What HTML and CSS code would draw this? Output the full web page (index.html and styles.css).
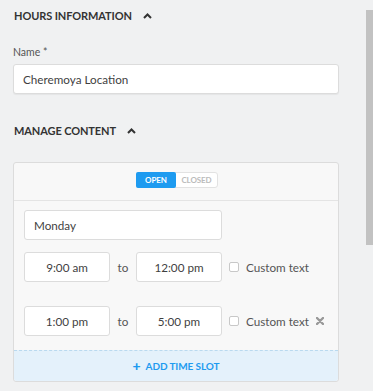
FILE: index.html
```html
<!DOCTYPE html>
<html>
<head>
<meta charset="utf-8">
<link rel="stylesheet" href="styles.css">
</head>
<body>
<div class="page">
  <main class="main">
    <h2 class="section-title">HOURS INFORMATION <svg class="chev" width="9" height="6" viewBox="0 0 9 6"><path d="M1 5 L4.5 1.5 L8 5" fill="none" stroke="#333" stroke-width="2"/></svg></h2>
    <label class="field-label">Name *</label>
    <div class="input name-input">Cheremoya Location</div>

    <h2 class="section-title second">MANAGE CONTENT <svg class="chev" width="9" height="6" viewBox="0 0 9 6"><path d="M1 5 L4.5 1.5 L8 5" fill="none" stroke="#333" stroke-width="2"/></svg></h2>

    <div class="panel">
      <div class="panel-head">
        <div class="toggle">
          <span class="tog tog-on">OPEN</span>
          <span class="tog tog-off">CLOSED</span>
        </div>
      </div>
      <div class="panel-body">
        <div class="input day-input">Monday</div>
        <div class="slot">
          <div class="input time">9:00 am</div>
          <span class="to">to</span>
          <div class="input time">12:00 pm</div>
          <span class="check"></span>
          <span class="custom">Custom text</span>
        </div>
        <div class="slot slot2">
          <div class="input time">1:00 pm</div>
          <span class="to">to</span>
          <div class="input time">5:00 pm</div>
          <span class="check"></span>
          <span class="custom">Custom text</span>
          <svg class="remove" width="8" height="8" viewBox="0 0 8 8"><path d="M1 1 L7 7 M7 1 L1 7" stroke="#999" stroke-width="2.4" stroke-linecap="round"/></svg>
        </div>
      </div>
      <div class="add-slot"><span class="plus">+</span> ADD TIME SLOT</div>
    </div>
  </main>
  <div class="scrollbar"><div class="thumb"></div></div>
</div>
</body>
</html>
```
FILE: styles.css
```css
html, body {
  margin: 0;
  padding: 0;
  background: #f0f1f2;
  font-family: Lato, "Liberation Sans", sans-serif;
  color: #444;
}
.page {
  display: flex;
  width: 373px;
  height: 391px;
  overflow: hidden;
}
.main {
  width: 326px;
  padding: 8px 0 0 13px;
  flex: none;
}
.scrollbar {
  margin-left: 27px;
  width: 7px;
  padding-top: 10px;
  flex: none;
}
.thumb {
  width: 7px;
  height: 235px;
  background: #c2c2c2;
}
.section-title {
  margin: 0 0 0 1px;
  font-size: 11px;
  font-weight: 700;
  color: #333;
  letter-spacing: -0.1px;
  line-height: 16px;
  display: flex;
  align-items: center;
}
.chev {
  margin-left: 11px;
}
.second {
  margin-top: 29px;
}
.field-label {
  display: block;
  margin: 21px 0 5px 0;
  font-size: 10.5px;
  line-height: 14px;
  color: #555;
}
.input {
  box-sizing: border-box;
  background: #fff;
  border: 1px solid #dcdcdc;
  border-radius: 3px;
  font-size: 11.7px;
  color: #3f3f3f;
  white-space: nowrap;
  flex: none;
}
.name-input {
  height: 30px;
  line-height: 28px;
  padding-left: 9px;
  box-shadow: 0 1px 1px rgba(0,0,0,0.05);
}
.panel {
  margin-top: 23px;
  background: #f8f8f8;
  border: 1px solid #dcdcdc;
  border-radius: 3px;
  box-sizing: border-box;
  height: 220px;
  display: flex;
  flex-direction: column;
}
.panel-head {
  height: 38px;
  border-bottom: 1px solid #e4e4e4;
  display: flex;
  justify-content: center;
  align-items: flex-start;
  padding-top: 9px;
  box-sizing: border-box;
  flex: none;
}
.toggle {
  display: flex;
  border: 1px solid #e2e2e2;
  border-radius: 3px;
  background: #fff;
  height: 16px;
  box-sizing: border-box;
  margin-left: 2px;
}
.tog {
  font-size: 8px;
  font-weight: 700;
  line-height: 14px;
  letter-spacing: -0.1px;
  text-align: center;
}
.tog-on {
  width: 40px;
  background: #1e9bf0;
  color: #fff;
  border-radius: 2px;
  margin: -1px 0 -1px -1px;
  line-height: 16px;
}
.tog-off {
  width: 41px;
  color: #bbb;
}
.panel-body {
  padding: 9px 10px 0 10px;
  flex: 1;
}
.day-input {
  width: 198px;
  height: 30px;
  line-height: 28px;
  padding-left: 9px;
}
.slot {
  display: flex;
  align-items: center;
  margin-top: 12px;
  white-space: nowrap;
}
.slot2 {
  margin-top: 24px;
}
.time {
  width: 86px;
  height: 30px;
  line-height: 28px;
  text-align: center;
}
.to {
  width: 26px;
  text-align: center;
  font-size: 11.7px;
  color: #555;
  flex: none;
}
.check {
  width: 10px;
  height: 10px;
  border: 1px solid #c8c8c8;
  border-radius: 2px;
  background: #fff;
  box-sizing: border-box;
  margin-left: 7px;
  flex: none;
}
.custom {
  margin-left: 7px;
  font-size: 11.7px;
  color: #555;
  flex: none;
}
.remove {
  margin-left: 7px;
  flex: none;
}
.add-slot {
  height: 31px;
  border-top: 1px dashed #b9d9ef;
  background: #e4f1fb;
  color: #1e9bf0;
  font-size: 10px;
  font-weight: 700;
  display: flex;
  justify-content: center;
  align-items: center;
  letter-spacing: -0.1px;
  border-radius: 0 0 3px 3px;
  box-sizing: border-box;
  flex: none;
}
.plus {
  font-size: 14px;
  font-weight: 900;
  margin-right: 5px;
  line-height: 10px;
}
```
